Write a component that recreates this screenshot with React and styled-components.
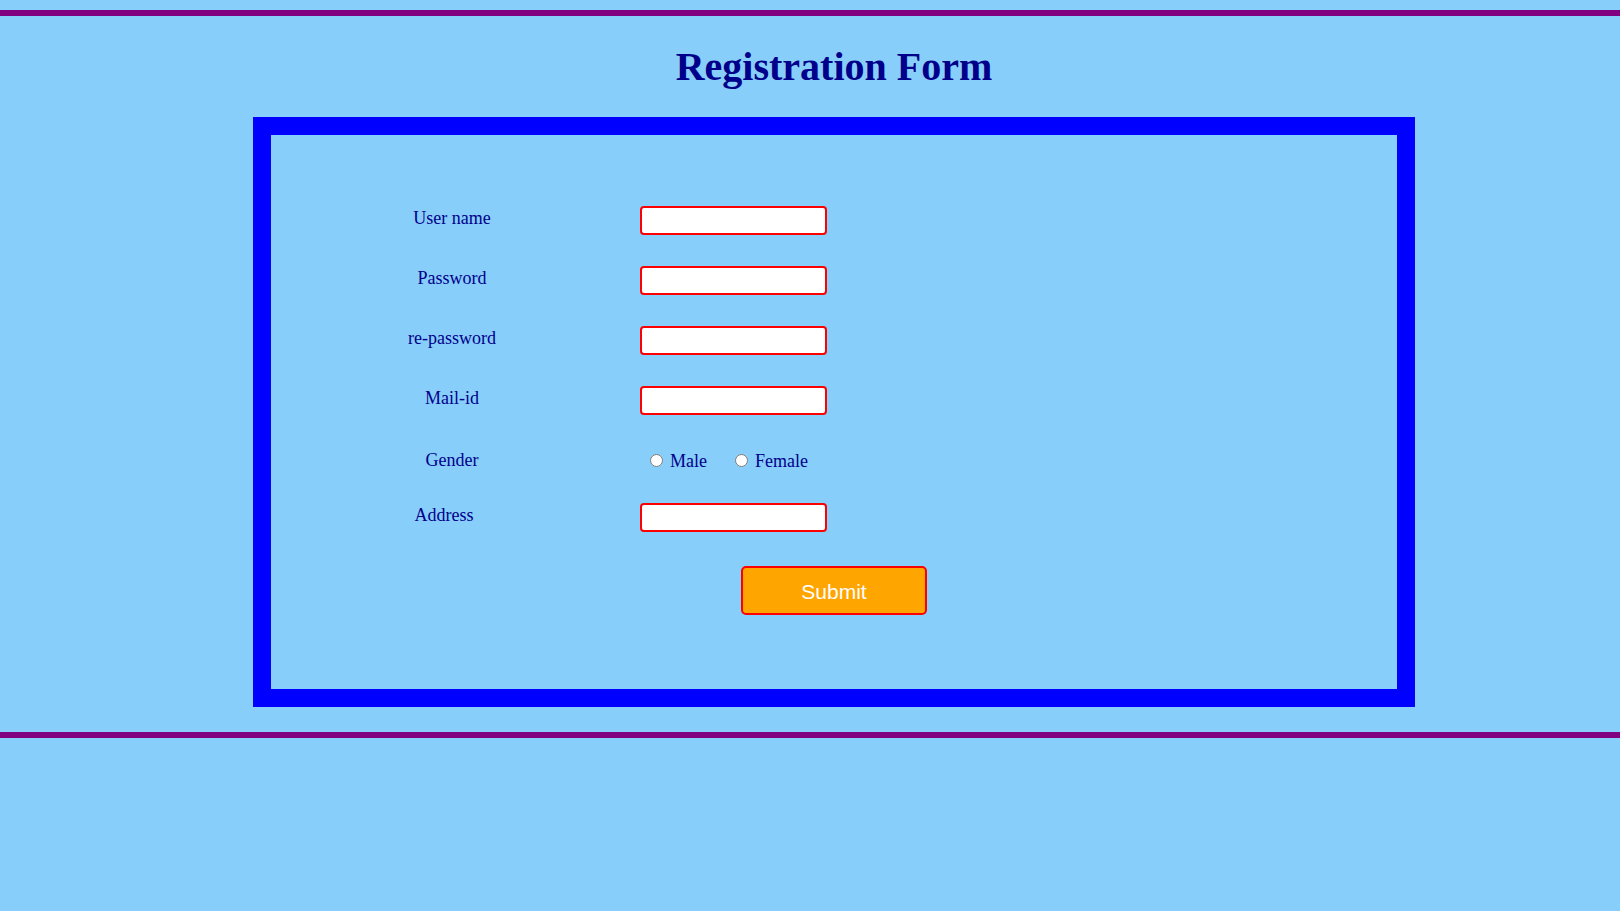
import React from "react";
import styled, { createGlobalStyle } from "styled-components";

const GlobalStyle = createGlobalStyle`
  html, body {
    margin: 0;
    padding: 0;
    background: #87cefa;
  }
  body {
    font-family: "Liberation Serif", "Times New Roman", serif;
  }
`;

const Rule = styled.hr`
  margin: ${(p) => p.$top}px 0 0;
  height: 6px;
  border: none;
  background: #800080;
`;

const Main = styled.main`
  padding-left: 48px;
`;

const Title = styled.h1`
  margin: 27px 0 27px;
  text-align: center;
  font-size: 40px;
  font-weight: bold;
  color: #00008b;
`;

const Box = styled.form`
  width: 1162px;
  box-sizing: border-box;
  margin: 0 auto;
  border: 18px solid #0000ff;
  padding: 71px 0 74px 101px;
`;

const Fields = styled.div`
  display: grid;
  row-gap: 31px;
`;

const Row = styled.div`
  display: grid;
  grid-template-columns: 160px 187px;
  column-gap: 108px;
  height: ${(p) => p.$height || 29}px;
`;

const Label = styled.label`
  padding-top: ${(p) => p.$top || 2}px;
  padding-right: ${(p) => p.$shift || 0}px;
  text-align: center;
  font-size: 18px;
  line-height: 20px;
  color: #00008b;
`;

const Input = styled.input`
  width: 187px;
  height: 29px;
  box-sizing: border-box;
  margin: 0;
  border: 2px solid #ff0000;
  border-radius: 4px;
  background: #fff;
  outline: none;
`;

const RadioGroup = styled.div`
  padding-top: 5px;
  font-size: 18px;
  line-height: 20px;
  color: #00008b;
  white-space: nowrap;
`;

const Option = styled.label`
  margin-right: ${(p) => p.$gap || 0}px;
`;

const Radio = styled.input.attrs({ type: "radio" })`
  width: 13px;
  height: 13px;
  margin: 0 7px 0 ${(p) => p.$left || 0}px;
`;

const Actions = styled.div`
  display: flex;
  justify-content: center;
  margin: 34px 0 0 -101px;
`;

const Submit = styled.button`
  width: 186px;
  height: 49px;
  padding: 3px 0 0;
  border: 2px solid #ff0000;
  border-radius: 5px;
  background: #ffa500;
  color: #fff;
  font-family: "Liberation Sans", Arial, sans-serif;
  font-size: 21px;
  cursor: pointer;
`;

const fields = [
  { id: "user", label: "User name", type: "text" },
  { id: "pass", label: "Password", type: "password" },
  { id: "repass", label: "re-password", type: "password" },
  { id: "mail", label: "Mail-id", type: "email" },
];

const App = () => {
  return (
    <>
      <GlobalStyle />
      <Rule $top={10} />
      <Main>
        <Title>Registration Form</Title>
        <Box onSubmit={(e) => e.preventDefault()}>
          <Fields>
            {fields.map((f) => (
              <Row key={f.id}>
                <Label htmlFor={f.id}>{f.label}</Label>
                <Input id={f.id} type={f.type} />
              </Row>
            ))}
            <Row $height={26}>
              <Label $top={4}>Gender</Label>
              <RadioGroup>
                <Option $gap={28}>
                  <Radio name="gender" value="male" $left={10} />
                  Male
                </Option>
                <Option>
                  <Radio name="gender" value="female" />
                  Female
                </Option>
              </RadioGroup>
            </Row>
            <Row>
              <Label htmlFor="address" $shift={16}>
                Address
              </Label>
              <Input id="address" type="text" />
            </Row>
          </Fields>
          <Actions>
            <Submit type="submit">Submit</Submit>
          </Actions>
        </Box>
      </Main>
      <Rule $top={25} />
    </>
  );
};

export default App;
